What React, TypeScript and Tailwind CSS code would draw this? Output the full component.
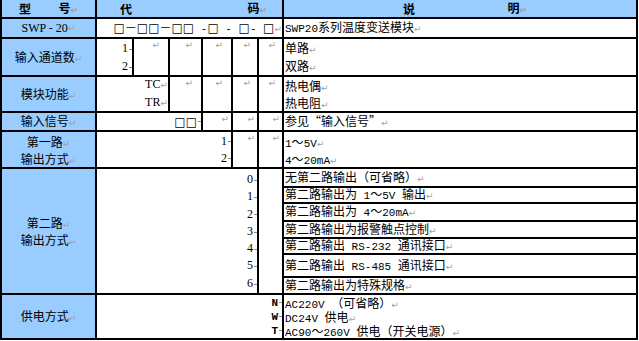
import React from "react";

const blue = "bg-[#99ccff]";

function Mark() {
  return <span className="font-['DejaVu_Sans'] text-[9px] text-[#a0a0a0]">↵</span>;
}

function Tick() {
  return <span className="ml-[1px] inline-block h-[1px] w-[3px] bg-[#888] align-middle" />;
}

// ASCII runs get the narrow latin face, squares use DejaVu, the rest stays CJK
function T({ s, mark = true }: { s: string; mark?: boolean }) {
  const parts = s.split(/([\x20-\x7e]+|□+)/).filter(Boolean);
  return (
    <span className="whitespace-pre">
      {parts.map((p, i) =>
        /^[\x20-\x7e]+$/.test(p) ? (
          <span key={i} className="font-['Liberation_Mono'] text-[11px]">
            {p}
          </span>
        ) : /^□+$/.test(p) ? (
          <span key={i} className="font-['DejaVu_Sans'] text-[12px]">
            {p}
          </span>
        ) : (
          <span key={i}>{p}</span>
        )
      )}
      {mark && <Mark />}
    </span>
  );
}

function Line({ h, children }: { h: string; children: React.ReactNode }) {
  return <div className={`${h} whitespace-nowrap`}>{children}</div>;
}

function Num({ s }: { s: string }) {
  return (
    <span className="font-['Liberation_Serif'] text-[12px]">
      {s}
      <Tick />
    </span>
  );
}

function MarkCell({ pad = "pr-[8px]" }: { pad?: string }) {
  return (
    <div className={`flex items-start justify-end bg-white pt-[2px] ${pad}`}>
      <Mark />
    </div>
  );
}

export default function App() {
  const second = [
    { h: "h-[17px]", s: "无第二路输出（可省略）" },
    { h: "h-[14px]", s: "第二路输出为 1～5V 输出" },
    { h: "h-[16px]", s: "第二路输出为 4～20mA" },
    { h: "h-[15px]", s: "第二路输出为报警触点控制" },
    { h: "h-[14px]", s: "第二路输出 RS-232 通讯接口" },
    { h: "h-[21px]", s: "第二路输出 RS-485 通讯接口" },
    { h: "h-[15px]", s: "第二路输出为特殊规格" },
  ];

  return (
    <div className="h-[341px] w-[639px] bg-white font-['Noto_Sans_CJK_SC',sans-serif] text-[12px] leading-none text-black">
      <div className="grid w-[638px] grid-cols-[93px_35px_34px_31px_28px_24px_23px_352px] grid-rows-[17px_18px_36px_34px_17px_35px_124px_43px] gap-[2px] bg-black px-[2px] pb-[2px]">
        {/* header */}
        <div className={`${blue} flex items-center justify-between px-[17px] font-bold`}>
          <span>型</span>
          <span>
            号<Mark />
          </span>
        </div>
        <div className={`${blue} col-span-6 flex items-center justify-between pl-[23px] pr-[15px] font-bold`}>
          <span>代</span>
          <span>
            码<Mark />
          </span>
        </div>
        <div className={`${blue} flex items-center justify-between pl-[119px] pr-[109px] font-bold`}>
          <span>说</span>
          <span>
            明<Mark />
          </span>
        </div>

        {/* SWP - 20 */}
        <div className={`${blue} flex items-center justify-center`}>
          <span className="font-['Liberation_Serif'] text-[12px]">SWP - 20</span>
          <Mark />
        </div>
        <div className="col-span-6 flex items-center justify-end bg-white leading-[18px]">
          <T s="□－□□－□□ -□ - □- □" />
        </div>
        <div className="flex items-center bg-white pl-[1px]">
          <T s="SWP20系列温度变送模块" />
        </div>

        {/* 输入通道数 */}
        <div className={`${blue} flex items-center justify-center`}>
          <T s="输入通道数" />
        </div>
        <div className="flex flex-col items-end justify-center bg-white leading-[18px]">
          <Num s="1" />
          <Num s="2" />
        </div>
        <MarkCell />
        <MarkCell />
        <MarkCell />
        <MarkCell pad="pr-[6px]" />
        <MarkCell pad="pr-[6px]" />
        <div className="flex flex-col justify-center bg-white pl-[1px] leading-[18px]">
          <Line h="h-[18px]">
            <T s="单路" />
          </Line>
          <Line h="h-[18px]">
            <T s="双路" />
          </Line>
        </div>

        {/* 模块功能 */}
        <div className={`${blue} flex items-center justify-center`}>
          <T s="模块功能" />
        </div>
        <div className="col-span-2 flex flex-col items-end justify-center bg-white leading-[17px]">
          <span className="font-['Liberation_Serif'] text-[12px]">
            TC<Mark />
          </span>
          <span className="font-['Liberation_Serif'] text-[12px]">
            TR<Mark />
          </span>
        </div>
        <MarkCell />
        <MarkCell />
        <MarkCell pad="pr-[6px]" />
        <MarkCell pad="pr-[6px]" />
        <div className="flex flex-col justify-center bg-white pl-[1px] leading-[17px]">
          <Line h="h-[17px]">
            <T s="热电偶" />
          </Line>
          <Line h="h-[17px]">
            <T s="热电阻" />
          </Line>
        </div>

        {/* 输入信号 */}
        <div className={`${blue} flex items-center justify-center`}>
          <T s="输入信号" />
        </div>
        <div className="col-span-3 flex items-center justify-end bg-white leading-[17px]">
          <T s="□□" mark={false} />
          <Tick />
        </div>
        <MarkCell pad="pr-[2px]" />
        <MarkCell pad="pr-[2px]" />
        <MarkCell pad="pr-[2px]" />
        <div className="flex items-center bg-white pl-[1px]">
          <T s="参见“输入信号”" />
        </div>

        {/* 第一路输出方式 */}
        <div className={`${blue} flex flex-col items-center justify-center leading-[17px]`}>
          <Line h="h-[17px]">
            <T s="第一路" />
          </Line>
          <Line h="h-[17px]">
            <T s="输出方式" />
          </Line>
        </div>
        <div className="col-span-4 flex flex-col items-end justify-center bg-white leading-[17px]">
          <Num s="1" />
          <Num s="2" />
        </div>
        <MarkCell pad="pr-[2px]" />
        <MarkCell pad="pr-[2px]" />
        <div className="flex flex-col justify-center bg-white pl-[1px] leading-[17px]">
          <Line h="h-[17px]">
            <T s="1～5V" />
          </Line>
          <Line h="h-[17px]">
            <T s="4～20mA" />
          </Line>
        </div>

        {/* 第二路输出方式 */}
        <div className={`${blue} flex flex-col items-center justify-center leading-[17px]`}>
          <Line h="h-[17px]">
            <T s="第二路" />
          </Line>
          <Line h="h-[17px]">
            <T s="输出方式" />
          </Line>
        </div>
        <div className="col-span-5 flex flex-col items-end bg-white pt-[2px] leading-[17.3px]">
          {["0", "1", "2", "3", "4", "5", "6"].map((d) => (
            <Num key={d} s={d} />
          ))}
        </div>
        <div className="bg-white" />
        <div className="flex flex-col gap-[2px] bg-black">
          {second.map((r) => (
            <div key={r.s} className={`${r.h} flex items-center whitespace-nowrap bg-white pl-[1px]`}>
              <T s={r.s} />
            </div>
          ))}
        </div>

        {/* 供电方式 */}
        <div className={`${blue} flex items-center justify-center`}>
          <T s="供电方式" />
        </div>
        <div className="col-span-6 flex flex-col items-end justify-center bg-white font-['Liberation_Mono'] text-[11px] font-bold leading-[14px]">
          {["N", "W", "T"].map((c) => (
            <span key={c}>
              {c}
              <Tick />
            </span>
          ))}
        </div>
        <div className="flex flex-col justify-center bg-white pl-[1px] leading-[14px]">
          <Line h="h-[14px]">
            <T s="AC220V （可省略）" />
          </Line>
          <Line h="h-[14px]">
            <T s="DC24V 供电" />
          </Line>
          <Line h="h-[14px]">
            <T s="AC90～260V 供电（开关电源）" />
          </Line>
        </div>
      </div>
    </div>
  );
}
